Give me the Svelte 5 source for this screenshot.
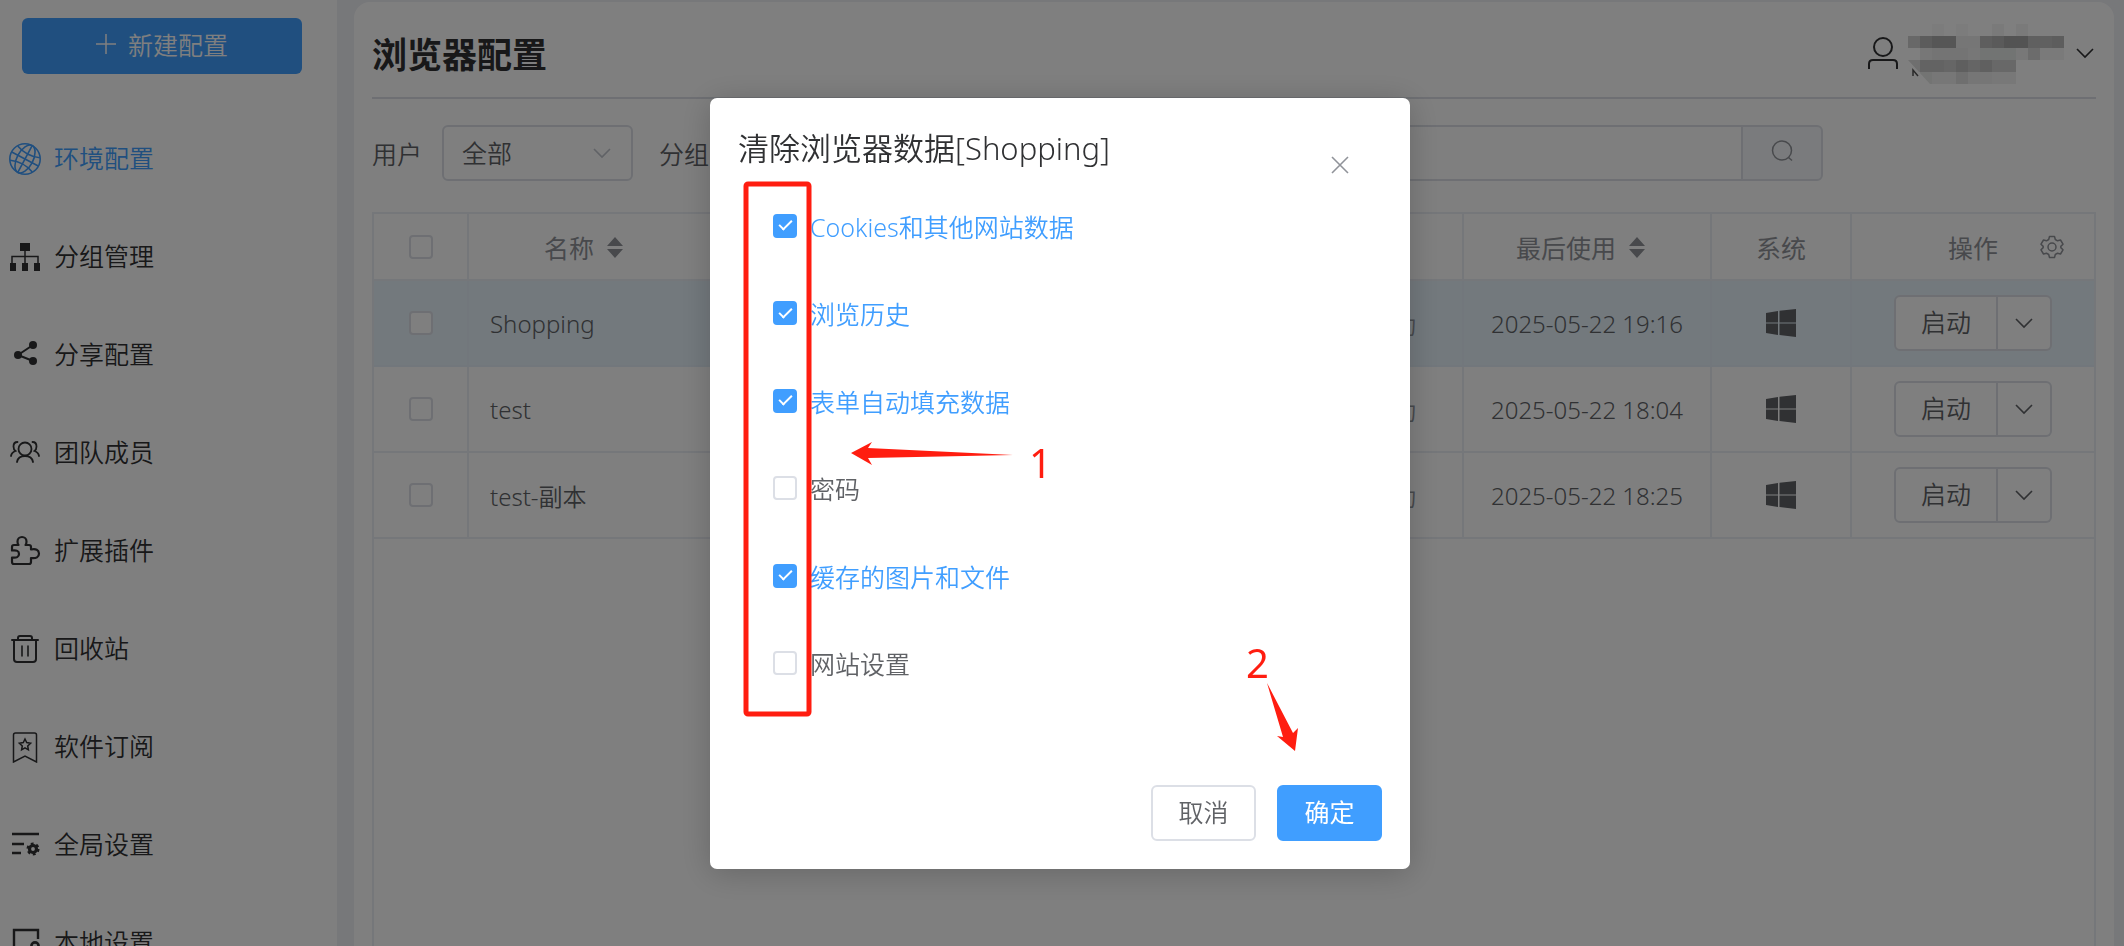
<script lang="ts">
    // Sidebar entries, the first one is the current page
    const menu = [
        { icon: 'globe', label: '环境配置' },
        { icon: 'tree', label: '分组管理' },
        { icon: 'share', label: '分享配置' },
        { icon: 'team', label: '团队成员' },
        { icon: 'puzzle', label: '扩展插件' },
        { icon: 'trash', label: '回收站' },
        { icon: 'bookmark', label: '软件订阅' },
        { icon: 'global', label: '全局设置' },
        { icon: 'local', label: '本地设置' }
    ];

    // Browser profiles listed in the table
    const profiles = [
        { name: 'Shopping', mode: '手动', lastUsed: '2025-05-22 19:16' },
        { name: 'test', mode: '手动', lastUsed: '2025-05-22 18:04' },
        { name: 'test-副本', mode: '手动', lastUsed: '2025-05-22 18:25' }
    ];

    // Kinds of data that can be cleared
    let options = $state([
        { id: 'cookies', label: 'Cookies和其他网站数据', checked: true },
        { id: 'history', label: '浏览历史', checked: true },
        { id: 'autofill', label: '表单自动填充数据', checked: true },
        { id: 'passwords', label: '密码', checked: false },
        { id: 'cache', label: '缓存的图片和文件', checked: true },
        { id: 'site', label: '网站设置', checked: false }
    ]);

    // Blurred account name, one entry per block: x, y, width, colour
    const mosaic = [
        [24, 0, 12, '#f9f9f9'], [48, 0, 12, '#f8f8f8'], [84, 0, 12, '#f4f4f4'], [108, 0, 12, '#f4f4f4'],
        [0, 12, 12, '#d0d0d0'], [12, 12, 12, '#b8b8b8'], [24, 12, 24, '#acacac'], [48, 12, 24, '#ececec'],
        [72, 12, 12, '#bcbcbc'], [84, 12, 12, '#b4b4b4'], [96, 12, 24, '#a6a6a6'], [120, 12, 24, '#c0c0c0'],
        [144, 12, 12, '#bababa'], [12, 24, 12, '#eeeeee'], [24, 24, 36, '#e8e8e8'], [60, 24, 12, '#eeeeee'],
        [72, 24, 36, '#e4e8e6'], [108, 24, 12, '#f0f0f0'], [120, 24, 12, '#d8d8d8'], [132, 24, 24, '#f4f4f4'],
        [0, 36, 12, '#dedede'], [12, 36, 24, '#c6c6c6'], [36, 36, 12, '#cccccc'], [48, 36, 12, '#bebebe'],
        [60, 36, 12, '#cacaca'], [72, 36, 12, '#c0c0c0'], [84, 36, 24, '#d0d0d0'], [12, 48, 12, '#e6e8e6'],
        [24, 48, 24, '#eeeeee'], [48, 48, 12, '#dedede'], [60, 48, 24, '#ececec'], [84, 48, 24, '#f0f0f0']
    ] as [number, number, number, string][];
</script>

{#snippet icon(name: string)}
    <svg class="icon" viewBox="0 0 32 32" aria-hidden="true">
        {#if name === 'globe'}
            <g fill="none" stroke="currentColor" stroke-width="1.6">
                <circle cx="16" cy="16" r="15.2" />
                <g transform="rotate(28 16 16)">
                    <ellipse cx="16" cy="16" rx="8" ry="15.2" />
                    <path d="M16 1v30M1 16h30M3.5 8q12.5 5 25 0M3.5 24q12.5-5 25 0" />
                </g>
            </g>
        {:else if name === 'tree'}
            <path d="M11 2h10v8H11zM1 22h6v8H1zM13 22h6v8h-6zM25 22h6v8h-6z" fill="currentColor" />
            <path d="M3 22v-6.5h26V22M16 10v12" fill="none" stroke="currentColor" stroke-width="1.5" />
        {:else if name === 'share'}
            <path d="M24 6L9 16l15 6" fill="none" stroke="currentColor" stroke-width="2" />
            <g fill="currentColor">
                <circle cx="24" cy="6" r="4" />
                <circle cx="9" cy="16" r="4" />
                <circle cx="24" cy="22" r="4" />
            </g>
        {:else if name === 'team'}
            <g fill="none" stroke="currentColor" stroke-width="1.8" stroke-linecap="round">
                <circle cx="16" cy="12" r="6.5" />
                <path d="M8 25q1-6 8-6t8 6M8.5 5q-4 0-4 4.5 0 3 2 4.5Q2.5 15.5 2 19M23.5 5q4 0 4 4.5 0 3-2 4.5 4 1.5 4.5 5" />
            </g>
        {:else if name === 'puzzle'}
            <path d="M3 12q0-2 2-2h4.5Q8.5 9 8.5 6.5a4.5 4.5 0 0 1 9 0Q17.5 9 16.5 10H20q2 0 2 2v2.5q7.5-1.5 8 4 0 5.5-8 4.5v4q0 2-2 2H5q-2 0-2-2v-4.5q7 1 7-3.5t-7-3.5z" fill="none" stroke="currentColor" stroke-width="2.2" stroke-linejoin="round" />
        {:else if name === 'trash'}
            <g fill="none" stroke="currentColor" stroke-width="2" stroke-linecap="round">
                <path d="M3 7h26M9 7V5q0-2 2-2h10q2 0 2 2v2M5 7v19q0 3 3 3h16q3 0 3-3V7" />
                <path d="M13 13v10M19 13v10" stroke-width="1.6" />
            </g>
        {:else if name === 'bookmark'}
            <path d="M4.5 31V4q0-2 2-2h19q2 0 2 2v27L16 25z" fill="none" stroke="currentColor" stroke-width="1.5" />
            <path d="M16 8l1.7 3.6 3.9.6-2.9 2.7.7 3.9-3.4-1.9-3.4 1.9.7-3.9-2.9-2.7 3.9-.6z" fill="none" stroke="currentColor" stroke-width="1.5" />
        {:else if name === 'global'}
            <path d="M3 5h27M3 15h12M3 24h9" fill="none" stroke="currentColor" stroke-width="2.4" />
            <circle cx="24" cy="20" r="3.5" fill="none" stroke="currentColor" stroke-width="3.2" />
            <circle cx="24" cy="20" r="5.4" fill="none" stroke="currentColor" stroke-width="2.2" stroke-dasharray="2.8 2.85" />
        {:else}
            <path d="M29 12V3H5v25h12" fill="none" stroke="currentColor" stroke-width="2.4" />
            <circle cx="26" cy="19" r="3.6" fill="none" stroke="currentColor" stroke-width="2.6" />
        {/if}
    </svg>
{/snippet}

{#snippet chevron()}
    <svg class="chevron" viewBox="0 0 18 18" aria-hidden="true">
        <path d="M1 5l8 8 8-8" fill="none" stroke="currentColor" stroke-width="1.6" />
    </svg>
{/snippet}

{#snippet sorter()}
    <svg class="sorter" viewBox="0 0 16 22" aria-hidden="true">
        <path d="M8 1l8 9H0zM8 22l8-9H0z" fill="currentColor" />
    </svg>
{/snippet}

<div class="app">
    <aside class="sidebar">
        <button class="create">
            <svg class="plus" viewBox="0 0 20 20" aria-hidden="true">
                <path d="M10 0v20M0 10h20" stroke="currentColor" stroke-width="1.5" />
            </svg>
            新建配置
        </button>
        <nav>
            {#each menu as item, i}
                <a href="#{item.icon}" class="menu-item" class:active={i === 0}>
                    {@render icon(item.icon)}
                    <span>{item.label}</span>
                </a>
            {/each}
        </nav>
    </aside>

    <main class="card">
        <header class="top">
            <h1>浏览器配置</h1>
            <button class="account" aria-label="account">
                <svg class="user" viewBox="0 0 30 34" aria-hidden="true">
                    <g fill="none" stroke="currentColor" stroke-width="2">
                        <circle cx="15" cy="11" r="9" />
                        <path d="M1 33v-5q0-4 4-4h20q4 0 4 4v5" />
                    </g>
                </svg>
                <svg class="mosaic" viewBox="0 0 156 60" aria-hidden="true">
                    {#each mosaic as [x, y, width, fill]}
                        <rect {x} {y} {width} height="12" {fill} />
                    {/each}
                    <path d="M0 36l22 24H0z" fill="#fff" />
                    <path d="M5 52V46l5 6" fill="none" stroke="#555" stroke-width="1.5" />
                </svg>
                {@render chevron()}
            </button>
        </header>

        <div class="filters">
            <label for="user">用户</label>
            <div class="select">
                <select id="user"><option>全部</option></select>
                {@render chevron()}
            </div>
            <label for="group">分组</label>
            <div class="select">
                <select id="group"><option>全部</option></select>
                {@render chevron()}
            </div>
            <div class="search">
                <input type="text" aria-label="search" />
                <button aria-label="search">
                    <svg viewBox="0 0 22 22" aria-hidden="true">
                        <circle cx="11" cy="10.5" r="9.5" fill="none" stroke="currentColor" stroke-width="1.5" />
                        <path d="M17.5 17.5l3.5 3" stroke="currentColor" stroke-width="1.5" />
                    </svg>
                </button>
            </div>
        </div>

        <div class="table-wrap">
            <table>
                <colgroup>
                    <col class="c-check" />
                    <col class="c-name" />
                    <col />
                    <col class="c-mode" />
                    <col class="c-date" />
                    <col class="c-os" />
                    <col class="c-ops" />
                </colgroup>
                <thead>
                    <tr>
                        <th><input type="checkbox" aria-label="all" /></th>
                        <th><div class="sortable">名称 {@render sorter()}</div></th>
                        <th></th>
                        <th></th>
                        <th><div class="sortable">最后使用 {@render sorter()}</div></th>
                        <th>系统</th>
                        <th>
                            <div class="ops-head">
                                <span>操作</span>
                                <svg class="gear" viewBox="0 0 24 24" aria-hidden="true">
                                    <g fill="none" stroke="currentColor" stroke-width="1.5" stroke-linejoin="round">
                                        <path d="M9.5 1.5h5l.8 3 2.2 1.3 3-.8 2.5 4.2-2.2 2.2v1.2l2.2 2.2-2.5 4.2-3-.8-2.2 1.3-.8 3h-5l-.8-3-2.2-1.3-3 .8L1 14.8l2.2-2.2v-1.2L1 9.2 3.5 5l3 .8 2.2-1.3z" />
                                        <circle cx="12" cy="12" r="4" />
                                    </g>
                                </svg>
                            </div>
                        </th>
                    </tr>
                </thead>
                <tbody>
                    {#each profiles as profile, i}
                        <tr class:current={i === 0}>
                            <td><input type="checkbox" aria-label={profile.name} /></td>
                            <td class="name">{profile.name}</td>
                            <td></td>
                            <td class="mode">{profile.mode}</td>
                            <td>{profile.lastUsed}</td>
                            <td>
                                <svg class="windows" viewBox="0 0 30 28" aria-hidden="true">
                                    <path d="M0 4l12-2v11.5H0zM13.5 1.8L30 0v13.5H13.5zM0 14.5h12V26L0 24zM13.5 14.5H30V28l-16.5-2z" fill="currentColor" />
                                </svg>
                            </td>
                            <td>
                                <div class="split">
                                    <button class="start">启动</button>
                                    <button class="more" aria-label="more">{@render chevron()}</button>
                                </div>
                            </td>
                        </tr>
                    {/each}
                </tbody>
            </table>
        </div>
    </main>
</div>

<div class="overlay">
    <div class="dialog" role="dialog" aria-modal="true" aria-labelledby="dialog-title">
        <div class="dialog-head">
            <h2 id="dialog-title">清除浏览器数据[Shopping]</h2>
            <button class="close" aria-label="close">
                <svg viewBox="0 0 18 18" aria-hidden="true">
                    <path d="M1 1l16 16M17 1L1 17" stroke="currentColor" stroke-width="1.6" />
                </svg>
            </button>
        </div>
        <div class="options">
            {#each options as option}
                <label class:checked={option.checked} for={option.id}>
                    <input type="checkbox" id={option.id} bind:checked={option.checked} />
                    {option.label}
                </label>
            {/each}
        </div>
        <div class="dialog-foot">
            <button class="cancel">取消</button>
            <button class="confirm">确定</button>
        </div>

        <!-- Step markers drawn over the dialog -->
        <svg class="steps" width="700" height="772" viewBox="0 0 700 772">
            <rect x="36" y="86" width="63" height="530" rx="2" />
            <path d="M141 355L162 344L158 350L303 357L158 360L162 367Z" />
            <text x="319" y="380">1</text>
            <path d="M557 585L573 639L567 638L585 653L588 630L583 635Z" />
            <text x="536" y="580">2</text>
        </svg>
    </div>
</div>

<style>
    :global(body) {
        background: #eff0f5;
        overflow: hidden;
    }

    .app,
    .overlay,
    button,
    select,
    input {
        font-family: 'Noto Sans', 'Noto Sans CJK SC', sans-serif;
        font-size: 25px;
        font-weight: 350;
    }

    button {
        cursor: pointer;
        padding: 0 0 4px;
    }

    .app {
        display: flex;
        gap: 17px;
        height: 100vh;
        padding-right: 10px;
        overflow: hidden;
        box-sizing: border-box;
        color: #606266;
    }

    /* Sidebar */
    .sidebar {
        flex: 0 0 337px;
        background: #fff;
        overflow: hidden;
    }

    .create {
        display: flex;
        align-items: center;
        justify-content: center;
        gap: 12px;
        width: 280px;
        height: 56px;
        margin: 18px 0 36px 22px;
        border: none;
        border-radius: 6px;
        background: #409eff;
        color: #fff;
    }

    .plus {
        width: 20px;
        height: 20px;
    }

    .menu-item {
        display: flex;
        align-items: center;
        gap: 13px;
        height: 98px;
        padding-left: 9px;
        color: #303133;
        text-decoration: none;
    }

    .menu-item.active {
        color: #409eff;
    }

    .menu-item span {
        padding-bottom: 4px;
    }

    .icon {
        width: 32px;
        height: 32px;
    }

    /* Main card */
    .card {
        flex: 1;
        min-width: 0;
        display: flex;
        flex-direction: column;
        margin-top: 2px;
        padding: 0 18px;
        background: #fff;
        border-radius: 16px 16px 0 0;
    }

    .top {
        display: flex;
        align-items: center;
        justify-content: space-between;
        height: 89px;
        padding-top: 6px;
        border-bottom: 2px solid #dcdfe6;
    }

    h1 {
        margin: 0;
        font-size: 35px;
        font-weight: 700;
        color: #303133;
    }

    .account {
        display: flex;
        align-items: center;
        gap: 10px;
        padding: 0 2px 0 0;
        border: none;
        background: none;
        color: #303133;
    }

    .user {
        width: 30px;
        height: 34px;
    }

    .mosaic {
        width: 156px;
        height: 60px;
        padding: 2px 2px 0 0;
    }

    .chevron {
        width: 18px;
        height: 18px;
    }

    .filters {
        display: flex;
        align-items: center;
        gap: 20px;
        padding: 26px 273px 31px 0;
    }

    .select {
        display: grid;
        align-items: center;
        width: 191px;
        margin-right: 6px;
    }

    .select select,
    .select .chevron {
        grid-area: 1 / 1;
    }

    .select .chevron {
        justify-self: end;
        margin-right: 22px;
        color: #c0c4cc;
        pointer-events: none;
    }

    select {
        appearance: none;
        height: 56px;
        padding: 0 18px;
        border: 2px solid #dcdfe6;
        border-radius: 6px;
        background: #fff;
        color: #606266;
    }

    .search {
        flex: 1;
        display: flex;
        height: 56px;
    }

    .search input {
        flex: 1;
        min-width: 0;
        border: 2px solid #dcdfe6;
        border-right: none;
        border-radius: 6px 0 0 6px;
    }

    .search button {
        width: 82px;
        border: 2px solid #dcdfe6;
        border-radius: 0 6px 6px 0;
        background: #f5f7fa;
        color: #909399;
    }

    .search svg {
        display: block;
        width: 22px;
        height: 22px;
        margin: 0 auto;
    }

    /* Profile table */
    .table-wrap {
        flex: 1;
        border: 2px solid #ebeef5;
        border-bottom: none;
    }

    table {
        width: 100%;
        table-layout: fixed;
        border-spacing: 0;
    }

    .c-check {
        width: 95px;
    }

    .c-name {
        width: 244px;
    }

    .c-mode {
        width: 142px;
    }

    .c-date {
        width: 248px;
    }

    .c-os {
        width: 140px;
    }

    .c-ops {
        width: 242px;
    }

    th,
    td {
        box-sizing: border-box;
        padding: 0;
        border-right: 2px solid #ebeef5;
        border-bottom: 2px solid #ebeef5;
        text-align: center;
        white-space: nowrap;
    }

    th:last-child,
    td:last-child {
        border-right: none;
    }

    th {
        height: 67px;
        color: #909399;
        font-weight: 400;
    }

    td {
        height: 86px;
        font-size: 24px;
    }

    th input,
    td input {
        display: grid;
        margin: 0 auto;
    }

    .current td {
        background: #e6f2fb;
        border-color: #e4eff8;
    }

    td.name {
        padding-left: 21px;
        text-align: left;
    }

    td.mode {
        color: #909399;
    }

    .sortable {
        display: flex;
        align-items: center;
        justify-content: center;
        gap: 13px;
        padding-right: 13px;
    }

    .sorter {
        width: 16px;
        height: 22px;
    }

    .ops-head {
        display: grid;
        grid-template-columns: 1fr auto 1fr;
        align-items: center;
    }

    .ops-head span {
        grid-column: 2;
    }

    .gear {
        width: 24px;
        height: 24px;
        justify-self: center;
        padding-left: 12px;
    }

    .windows {
        display: block;
        width: 30px;
        height: 28px;
        margin: 0 auto;
    }

    .split {
        display: inline-flex;
        vertical-align: middle;
        height: 56px;
    }

    .split button {
        border: 2px solid #dcdfe6;
        background: #fff;
        color: #606266;
    }

    .split .start {
        width: 104px;
        border-radius: 6px 0 0 6px;
    }

    .split .more {
        width: 54px;
        padding: 0;
        border-left: none;
        border-radius: 0 6px 6px 0;
    }

    .more .chevron {
        display: block;
        margin: 0 auto;
    }

    /* Checkboxes, shared by the table and the dialog */
    input[type='checkbox'] {
        appearance: none;
        display: grid;
        place-content: center;
        flex: none;
        width: 24px;
        height: 24px;
        border: 2px solid #dcdfe6;
        border-radius: 4px;
        background: #fff;
    }

    input[type='checkbox']:checked {
        border-color: #409eff;
        background: #409eff;
    }

    input[type='checkbox']:checked::after {
        content: '';
        width: 5px;
        height: 11px;
        border: solid #fff;
        border-width: 0 2px 2px 0;
        transform: translateY(-2px) rotate(45deg);
    }

    /* Clear data dialog */
    .overlay {
        position: fixed;
        inset: 0;
        display: flex;
        justify-content: center;
        align-items: flex-start;
        padding: 98px 4px 0 0;
        background: rgba(0, 0, 0, 0.5);
    }

    .dialog {
        position: relative;
        width: 700px;
        border-radius: 7px;
        background: #fff;
        box-shadow: 0 4px 32px rgba(0, 0, 0, 0.2);
        color: #606266;
    }

    .dialog-head {
        display: flex;
        align-items: flex-end;
        justify-content: space-between;
        box-sizing: border-box;
        height: 84px;
        padding: 30px 56px 3px 28px;
    }

    h2 {
        align-self: flex-start;
        margin: 0;
        font-size: 31px;
        line-height: 40px;
        font-weight: 350;
        color: #303133;
    }

    .close {
        width: 28px;
        height: 28px;
        padding: 0;
        border: none;
        background: none;
        color: #909399;
    }

    .close svg {
        display: block;
        width: 18px;
        height: 18px;
        margin: 0 auto;
    }

    .options {
        display: grid;
        grid-auto-rows: 1fr;
        height: 525px;
        padding-left: 63px;
    }

    .options label {
        display: flex;
        align-items: center;
        gap: 13px;
    }

    .options input {
        margin: 0;
    }

    .options .checked {
        color: #409eff;
    }

    .dialog-foot {
        display: flex;
        justify-content: flex-end;
        gap: 21px;
        padding: 78px 28px 28px;
    }

    .dialog-foot button {
        width: 105px;
        height: 56px;
        border: 2px solid #dcdfe6;
        border-radius: 6px;
        background: #fff;
        color: #606266;
    }

    .dialog-foot .confirm {
        border-color: #409eff;
        background: #409eff;
        color: #fff;
        font-weight: 400;
    }

    .steps {
        position: absolute;
        top: 0;
        left: 0;
        pointer-events: none;
        fill: #ff1d10;
        font-size: 40px;
        font-weight: 400;
    }

    .steps rect {
        fill: none;
        stroke: #ff1d10;
        stroke-width: 5px;
    }
</style>
